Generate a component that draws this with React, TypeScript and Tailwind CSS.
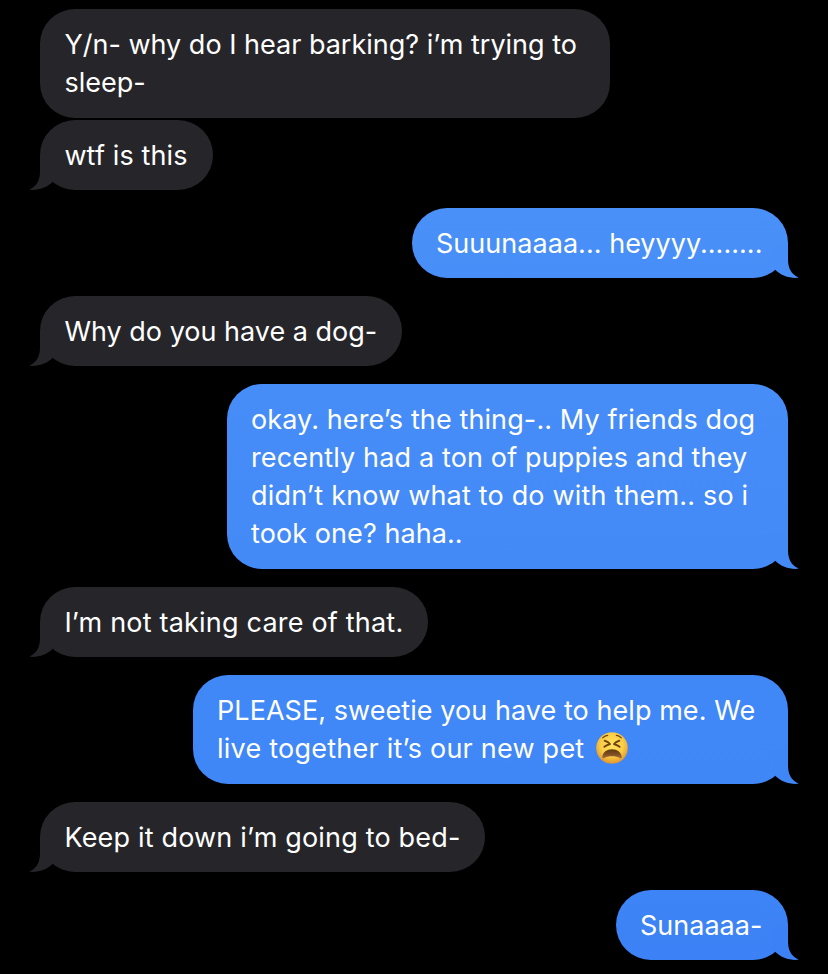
import clsx from "clsx"

type Line = { text: string; tracking?: string; emoji?: boolean }

type Message = {
  from: "them" | "me"
  size: string
  color: string
  fill?: string
  lines: Line[]
}

const messages: Message[] = [
  {
    from: "them",
    size: "w-[570px] h-[109px] mb-0.5",
    color: "bg-[#26262a]",
    lines: [{ text: "Y/n- why do I hear barking? i’m trying to" }, { text: "sleep-" }],
  },
  {
    from: "them",
    size: "w-[173px] h-[70px] mb-[18px]",
    color: "bg-[#26262a]",
    fill: "fill-[#26262a]",
    lines: [{ text: "wtf is this", tracking: "tracking-[0.12px]" }],
  },
  {
    from: "me",
    size: "w-[376px] h-[70px] mb-[18px]",
    color: "bg-linear-to-b from-[#4990f8] to-[#488ef8]",
    fill: "fill-[#488ef8]",
    lines: [{ text: "Suuunaaaa... heyyyy........", tracking: "tracking-[0.03px]" }],
  },
  {
    from: "them",
    size: "w-[362px] h-[70px] mb-[18px]",
    color: "bg-[#26262a]",
    fill: "fill-[#26262a]",
    lines: [{ text: "Why do you have a dog-" }],
  },
  {
    from: "me",
    size: "w-[561px] h-[185px] mb-[18px]",
    color: "bg-linear-to-b from-[#478df8] to-[#448af7]",
    fill: "fill-[#448af7]",
    lines: [
      { text: "okay. here’s the thing-.. My friends dog", tracking: "tracking-[0.11px]" },
      { text: "recently had a ton of puppies and they", tracking: "tracking-[0.14px]" },
      { text: "didn’t know what to do with them.. so i", tracking: "tracking-[0.18px]" },
      { text: "took one? haha..", tracking: "tracking-[0.08px]" },
    ],
  },
  {
    from: "them",
    size: "w-[388px] h-[70px] mb-[18px]",
    color: "bg-[#26262a]",
    fill: "fill-[#26262a]",
    lines: [{ text: "I’m not taking care of that.", tracking: "tracking-[0.2px]" }],
  },
  {
    from: "me",
    size: "w-[595px] h-[109px] mb-[18px]",
    color: "bg-linear-to-b from-[#4188f7] to-[#3f86f7]",
    fill: "fill-[#3f86f7]",
    lines: [
      { text: "PLEASE, sweetie you have to help me. We", tracking: "tracking-[0.06px]" },
      { text: "live together it’s our new pet", tracking: "tracking-[0.23px]", emoji: true },
    ],
  },
  {
    from: "them",
    size: "w-[445px] h-[70px] mb-[18px]",
    color: "bg-[#26262a]",
    fill: "fill-[#26262a]",
    lines: [{ text: "Keep it down i’m going to bed-", tracking: "tracking-[0.18px]" }],
  },
  {
    from: "me",
    size: "w-[172px] h-[70px]",
    color: "bg-linear-to-b from-[#3d84f6] to-[#3c82f6]",
    fill: "fill-[#3c82f6]",
    lines: [{ text: "Sunaaaa-" }],
  },
]

function Tail({ side, fill }: { side: "them" | "me"; fill: string }) {
  return (
    <svg
      viewBox="0 0 26 40"
      className={clsx(
        "absolute bottom-0 h-10 w-[26px]",
        side === "them" ? "-left-[11px]" : "-right-[11px] -scale-x-100",
        fill,
      )}
    >
      <path d="M11 5V21C11 30 8 36 .8 39.3C.5 39.6 .7 39.8 1.2 39.8C10 40.4 18 37.5 23.5 32L26 28V5Z" />
    </svg>
  )
}

function TiredFace() {
  return (
    <svg viewBox="0 0 32 32" className="mb-[3px] ml-[11.5px] size-8" role="img" aria-label="tired face">
      <defs>
        <radialGradient id="face" cx="0.5" cy="0.4" r="0.6">
          <stop offset="0" stopColor="#ffe45c" />
          <stop offset="0.6" stopColor="#fbcd45" />
          <stop offset="1" stopColor="#e09530" />
        </radialGradient>
        <linearGradient id="mouth" x1="0" y1="0" x2="0" y2="1">
          <stop offset="0" stopColor="#5e3713" />
          <stop offset="0.55" stopColor="#7d4f22" />
          <stop offset="1" stopColor="#a3703a" />
        </linearGradient>
      </defs>
      <circle cx="16" cy="16" r="15.8" fill="url(#face)" />
      <g fill="none" stroke="#704314" strokeWidth="1.9" strokeLinecap="round" strokeLinejoin="round">
        <path d="M8.6 8.7C10.8 9.5 12.9 10.7 14 12C12 12.7 10 13.5 8.4 14.8" />
        <path d="M23.4 8.7C21.2 9.5 19.1 10.7 18 12C20 12.7 22 13.5 23.6 14.8" />
        <path d="M6.7 5.8C8 4.3 9.7 3.4 11.7 3.3M25.3 5.8C24 4.3 22.3 3.4 20.3 3.3" strokeWidth="1.2" />
      </g>
      <path
        d="M6.3 25.1C6.8 20.1 10.7 17.2 16 17.2S25.2 20.1 25.7 25.1C25.8 26.3 24.9 26.8 24 26.1C22 24.7 19.2 24.2 16 24.2S10 24.7 8 26.1C7.1 26.8 6.2 26.3 6.3 25.1Z"
        fill="url(#mouth)"
      />
    </svg>
  )
}

function Bubble({ message }: { message: Message }) {
  const { from, size, color, fill, lines } = message
  return (
    <div
      className={clsx(
        "relative shrink-0 rounded-[35px] pt-[17px]",
        from === "me" ? "self-end pl-6" : "self-start pl-[24.4px]",
        size,
        color,
      )}
    >
      {fill && <Tail side={from} fill={fill} />}
      {lines.map((line) => (
        <p key={line.text} className={clsx("flex h-[38px] items-center whitespace-nowrap", line.tracking)}>
          {line.text}
          {line.emoji && <TiredFace />}
        </p>
      ))}
    </div>
  )
}

export default function App() {
  return (
    <main className="flex h-[974px] w-[828px] flex-col overflow-hidden bg-black px-10 pt-[9px] font-['Inter','Liberation_Sans',sans-serif] text-[27px] leading-[38px] text-white">
      {messages.map((message) => (
        <Bubble key={message.lines[0].text} message={message} />
      ))}
    </main>
  )
}
